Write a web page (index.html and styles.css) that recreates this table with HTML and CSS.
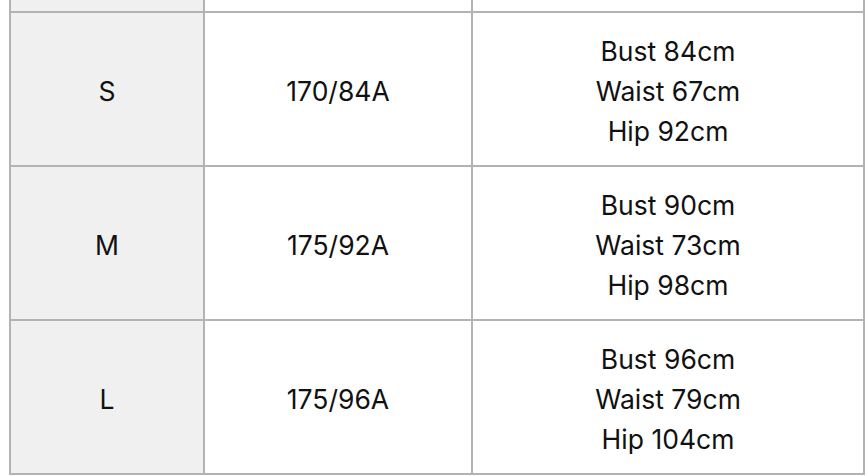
FILE: index.html
```html
<!DOCTYPE html>
<html>
<head>
<meta charset="utf-8">
<link rel="stylesheet" href="styles.css">
</head>
<body>
<div class="wrap">
<table class="size-table">
  <colgroup>
    <col class="c-size">
    <col class="c-code">
    <col class="c-meas">
  </colgroup>
  <tbody>
    <tr class="partial">
      <td class="size"></td>
      <td></td>
      <td></td>
    </tr>
    <tr>
      <td class="size">S</td>
      <td>170/84A</td>
      <td><div class="lines"><span>Bust 84cm</span><span>Waist 67cm</span><span>Hip 92cm</span></div></td>
    </tr>
    <tr>
      <td class="size">M</td>
      <td>175/92A</td>
      <td><div class="lines"><span>Bust 90cm</span><span>Waist 73cm</span><span>Hip 98cm</span></div></td>
    </tr>
    <tr>
      <td class="size">L</td>
      <td>175/96A</td>
      <td><div class="lines"><span>Bust 96cm</span><span>Waist 79cm</span><span>Hip 104cm</span></div></td>
    </tr>
  </tbody>
</table>
</div>
</body>
</html>
```
FILE: styles.css
```css
html, body {
  margin: 0;
  padding: 0;
  background: #ffffff;
}
body {
  font-family: "Inter", "Roboto", "Liberation Sans", sans-serif;
  color: #111111;
  overflow: hidden;
}
.wrap {
  padding-left: 9px;
}
.size-table {
  border-collapse: collapse;
  width: 854px;
  table-layout: fixed;
  font-size: 26.5px;
}
.c-size { width: 194px; }
.c-code { width: 268px; }
.c-meas { width: 392px; }
.size-table td {
  border: 2px solid #b3b3b3;
  text-align: center;
  vertical-align: middle;
  height: 154px;
  padding: 3px 0 0;
  box-sizing: border-box;
  line-height: 40px;
}
.size-table td.size {
  background: #f0f0f0;
}
.size-table tr.partial td {
  height: 12px;
  padding: 0;
  border-top: none;
}
.lines {
  display: flex;
  flex-direction: column;
  align-items: center;
}
```
